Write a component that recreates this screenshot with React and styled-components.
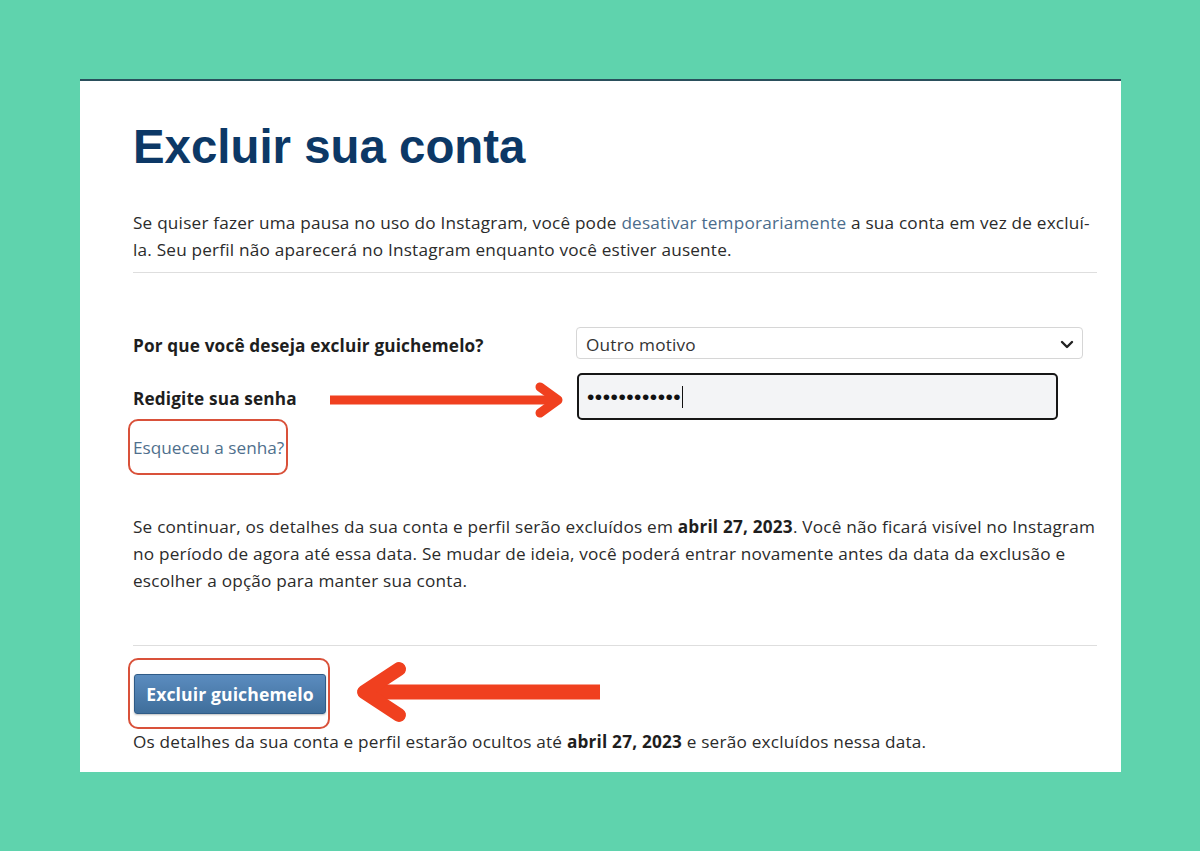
import React from 'react'
import styled, { createGlobalStyle } from 'styled-components'

const GlobalStyle = createGlobalStyle`
  html, body {
    margin: 0;
    padding: 0;
    background: #5fd3ad;
  }
  body {
    font-family: "Open Sans", "Noto Sans", sans-serif;
  }
`

const colors = {
  green: '#5fd3ad',
  title: '#0c3866',
  text: '#2b2b2b',
  link: '#4b6c8c',
  red: '#f0401f',
  line: '#dedede',
}

const Page = styled.div`
  width: 1200px;
  height: 851px;
  box-sizing: border-box;
  padding: 79px 79px 0 80px;
`

const Card = styled.div`
  position: relative;
  width: 1041px;
  box-sizing: border-box;
  background: #fff;
  border-top: 2px solid #2a4f5c;
  padding: 38px 24px 17px 53px;
  color: ${colors.text};
`

const Title = styled.h1`
  margin: 0;
  font-family: "Liberation Sans", Arial, sans-serif;
  font-weight: 700;
  font-size: 47.4px;
  line-height: 56px;
  color: ${colors.title};
`

const Paragraph = styled.p`
  margin: ${p => p.top || 0}px 0 0;
  font-size: 17.2px;
  line-height: 27px;
  white-space: nowrap;
  letter-spacing: 0.2px;
`

const Link = styled.a`
  color: ${colors.link};
  text-decoration: none;
`

const Divider = styled.hr`
  margin: ${p => p.top}px 0 0;
  border: 0;
  border-top: 1px solid ${colors.line};
  height: 0;
`

const FormRow = styled.div`
  display: flex;
  align-items: center;
  margin-top: ${p => p.top}px;
`

const Label = styled.label`
  width: 443px;
  flex-shrink: 0;
  font-size: 17.2px;
  letter-spacing: 0.15px;
  font-weight: 700;
  color: #1e1e1e;
  padding-top: ${p => p.shift || 0}px;
`

const Select = styled.div`
  width: 507px;
  height: 32px;
  box-sizing: border-box;
  border: 1px solid #d6d6d6;
  border-radius: 4px;
  display: flex;
  align-items: center;
  justify-content: space-between;
  padding: 3px 8px 0 9px;
  font-size: 17.2px;
  letter-spacing: 0.2px;
  color: #333;
`

const PasswordField = styled.div`
  width: 481px;
  height: 47px;
  box-sizing: border-box;
  border: 2px solid #161616;
  border-radius: 5px;
  background: #f3f4f6;
  display: flex;
  align-items: center;
  padding-left: 8px;
  margin-left: 1px;
`

const Dots = styled.span`
  font-family: "Liberation Sans", Arial, sans-serif;
  font-size: 21px;
  letter-spacing: 0.5px;
  color: #111;
  line-height: 1;
`

const Caret = styled.span`
  display: inline-block;
  width: 1px;
  height: 22px;
  background: #111;
  margin-left: 1px;
`

const Highlight = styled.div`
  display: inline-flex;
  align-items: center;
  border: 2px solid #d9513a;
  border-radius: 10px;
  margin: ${p => p.mt}px 0 0 -5px;
  padding: ${p => p.pad};
  box-sizing: border-box;
  height: ${p => p.h}px;
`

const ForgotLink = styled(Link)`
  font-size: 17.2px;
  letter-spacing: 0;
  color: #4f6f8d;
`

const Bold = styled.b`
  font-weight: 700;
  color: #1e1e1e;
`

const DeleteButton = styled.button`
  width: 192px;
  height: 40px;
  border: 1px solid #2f5b87;
  border-radius: 3px;
  background: linear-gradient(#5b8cbf, #3f6e9b);
  color: #fff;
  font-family: "Open Sans", sans-serif;
  font-weight: 700;
  font-size: 17.6px;
  letter-spacing: 0.1px;
  padding: 0;
  box-shadow: 0 1px 2px rgba(0, 0, 0, 0.25);
`

const Arrow = styled.svg`
  position: absolute;
  left: ${p => p.x}px;
  top: ${p => p.y}px;
  overflow: visible;
`

const Chevron = () => (
  <svg width="14" height="9" viewBox="0 0 14 9">
    <path d="M2 2l5 5 5-5" fill="none" stroke="#222" strokeWidth="2.4" strokeLinecap="round" strokeLinejoin="round" />
  </svg>
)

export default function App() {
  return (
    <>
      <GlobalStyle />
      <Page>
        <Card>
          <Title>Excluir sua conta</Title>
          <Paragraph top={34}>
            Se quiser fazer uma pausa no uso do Instagram, você pode <Link href="#">desativar temporariamente</Link> a sua conta em vez de excluí-
            <br />
            la. Seu perfil não aparecerá no Instagram enquanto você estiver ausente.
          </Paragraph>
          <Divider top={9} />

          <FormRow top={54}>
            <Label shift={4}>Por que você deseja excluir guichemelo?</Label>
            <Select>
              Outro motivo
              <Chevron />
            </Select>
          </FormRow>
          <FormRow top={14}>
            <Label shift={4}>Redigite sua senha</Label>
            <PasswordField>
              <Dots>••••••••••••</Dots>
              <Caret />
            </PasswordField>
          </FormRow>
          <Highlight mt={-1} h={56} pad="0 2px 0 3px">
            <ForgotLink href="#">Esqueceu a senha?</ForgotLink>
          </Highlight>

          <Paragraph top={38}>
            Se continuar, os detalhes da sua conta e perfil serão excluídos em <Bold>abril 27, 2023</Bold>. Você não ficará visível no Instagram
            <br />
            no período de agora até essa data. Se mudar de ideia, você poderá entrar novamente antes da data da exclusão e
            <br />
            escolher a opção para manter sua conta.
          </Paragraph>
          <Divider top={51} />

          <Highlight mt={12} h={71} pad="0 2px 0 4px">
            <DeleteButton>Excluir guichemelo</DeleteButton>
          </Highlight>
          <Paragraph top={-1}>
            Os detalhes da sua conta e perfil estarão ocultos até <Bold>abril 27, 2023</Bold> e serão excluídos nessa data.
          </Paragraph>

          <Arrow x={250} y={302} width="236" height="34" viewBox="0 0 236 34">
            <path d="M0 17H228" stroke={colors.red} strokeWidth="9" />
            <path d="M210 4L228 17L210 30" fill="none" stroke={colors.red} strokeWidth="9" strokeLinecap="round" strokeLinejoin="round" />
          </Arrow>
          <Arrow x={274} y={582} width="250" height="60" viewBox="0 0 250 60">
            <path d="M246 29H12" stroke={colors.red} strokeWidth="15" />
            <path d="M45 6L10 29L45 52" fill="none" stroke={colors.red} strokeWidth="14" strokeLinecap="round" strokeLinejoin="round" />
          </Arrow>
        </Card>
      </Page>
    </>
  )
}
